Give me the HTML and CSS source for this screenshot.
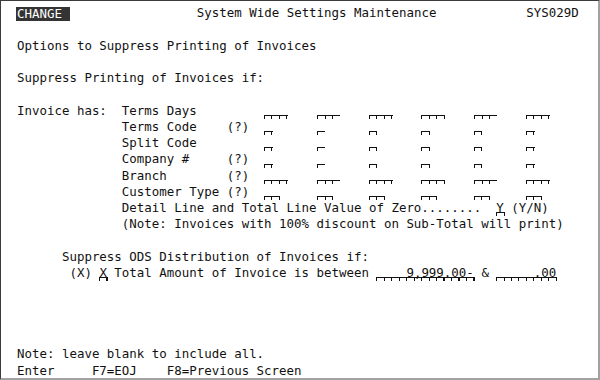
FILE: index.html
```html
<!DOCTYPE html>
<html>
<head>
<meta charset="utf-8">
<title>System Wide Settings Maintenance</title>
<link rel="stylesheet" href="styles.css">
</head>
<body>
<div class="screen">
<div class="row"><span class="rev">CHANGE </span>                 System Wide Settings Maintenance            SYS029D</div>
<div class="row"></div>
<div class="row">Options to Suppress Printing of Invoices</div>
<div class="row"></div>
<div class="row">Suppress Printing of Invoices if:</div>
<div class="row"></div>
<div class="row">Invoice has:  Terms Days         <span class="f f3"></span>    <span class="f f3"></span>    <span class="f f3"></span>    <span class="f f3"></span>    <span class="f f3"></span>    <span class="f f3"></span></div>
<div class="row">              Terms Code    (?)  <span class="f f1"></span>      <span class="f f1"></span>      <span class="f f1"></span>      <span class="f f1"></span>      <span class="f f1"></span>      <span class="f f1"></span></div>
<div class="row">              Split Code         <span class="f f1"></span>      <span class="f f1"></span>      <span class="f f1"></span>      <span class="f f1"></span>      <span class="f f1"></span>      <span class="f f1"></span></div>
<div class="row">              Company #     (?)  <span class="f f1"></span>      <span class="f f1"></span>      <span class="f f1"></span>      <span class="f f1"></span>      <span class="f f1"></span>      <span class="f f1"></span></div>
<div class="row">              Branch        (?)  <span class="f f3"></span>    <span class="f f3"></span>    <span class="f f3"></span>    <span class="f f3"></span>    <span class="f f3"></span>    <span class="f f3"></span></div>
<div class="row">              Customer Type (?)  <span class="f f2"></span>     <span class="f f2"></span>     <span class="f f2"></span>     <span class="f f2"></span>     <span class="f f2"></span>     <span class="f f2"></span></div>
<div class="row">              Detail Line and Total Line Value of Zero........  <span class="f f1">Y</span> (Y/N)</div>
<div class="row">              (Note: Invoices with 100% discount on Sub-Total will print)</div>
<div class="row"></div>
<div class="row">      Suppress ODS Distribution of Invoices if:</div>
<div class="row">       (X) <span class="f f1">X</span> Total Amount of Invoice is between <span class="f f13">    9,999.00-</span> &amp; <span class="f f8">     .00</span></div>
<div class="row"></div>
<div class="row"></div>
<div class="row"></div>
<div class="row"></div>
<div class="row">Note: leave blank to include all.</div>
<div class="row">Enter     F7=EOJ    F8=Previous Screen</div>
</div>
</body>
</html>
```
FILE: styles.css
```css
html, body {
  margin: 0;
  padding: 0;
  background: #ffffff;
}

.screen {
  box-sizing: border-box;
  width: 600px;
  height: 380px;
  overflow: hidden;
  padding: 4.2px 0 0 16px;
  border-top: 1px solid #3c3c3c;
  border-left: 1px solid #3c3c3c;
  border-right: 2px solid #a2a2a2;
  border-bottom: 2px solid #a2a2a2;
  background: #ffffff;
  color: #111111;
  font-family: "DejaVu Sans Mono", monospace;
  font-size: 12.45px;
  line-height: 16.25px;
}

.row {
  height: 16.25px;
  white-space: pre;
}

.rev {
  display: inline-block;
  vertical-align: top;
  box-sizing: border-box;
  width: 53.5px;
  height: 14px;
  margin: 2px 0 0 -1px;
  padding-left: 1px;
  background: #343434;
  color: #ffffff;
  line-height: 14px;
}

.f {
  display: inline-block;
  vertical-align: top;
  height: 16.25px;
  margin-right: -1px;
  background:
    linear-gradient(#111, #111) 0 calc(100% - 3px) / 100% 1px no-repeat,
    repeating-linear-gradient(90deg, #111 0 1px, transparent 1px 7.5px) 0 100% / 100% 3px no-repeat;
}

.f1 { width: 8.5px; }
.f2 { width: 16px; }
.f3 { width: 23.5px; }
.f8 { width: 61px; }
.f13 { width: 98.5px; }
```
